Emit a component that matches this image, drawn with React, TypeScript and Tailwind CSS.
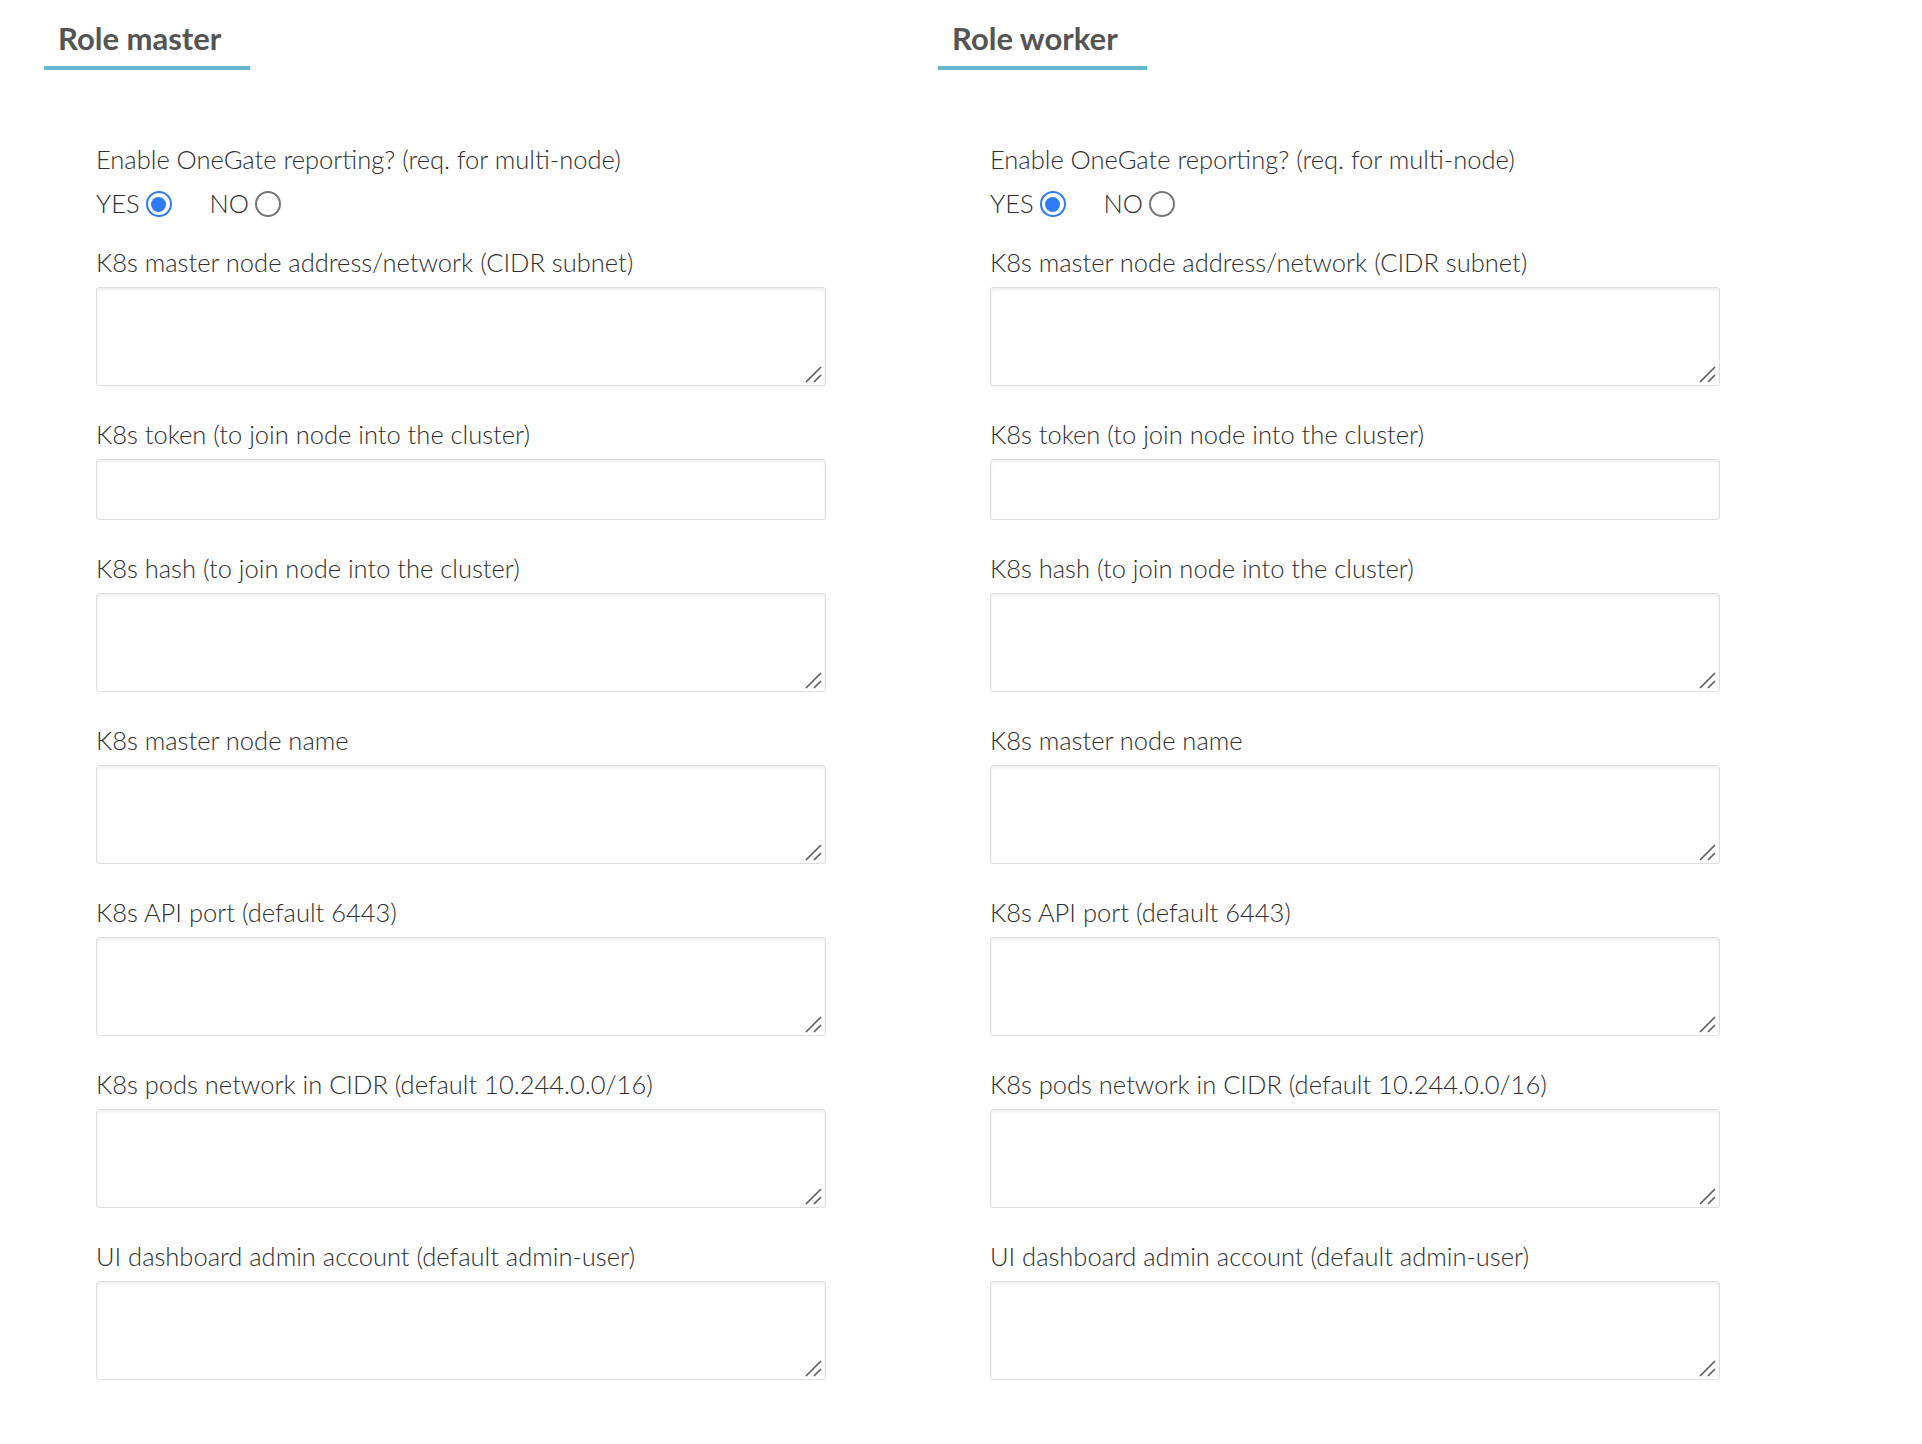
import React from 'react';

interface Field {
  label: string;
  kind: 'textarea' | 'input';
}

const fields: Field[] = [
  { label: 'K8s master node address/network (CIDR subnet)', kind: 'textarea' },
  { label: 'K8s token (to join node into the cluster)', kind: 'input' },
  { label: 'K8s hash (to join node into the cluster)', kind: 'textarea' },
  { label: 'K8s master node name', kind: 'textarea' },
  { label: 'K8s API port (default 6443)', kind: 'textarea' },
  { label: 'K8s pods network in CIDR (default 10.244.0.0/16)', kind: 'textarea' },
  { label: 'UI dashboard admin account (default admin-user)', kind: 'textarea' },
];

function Radio({ checked }: { checked: boolean }) {
  return checked ? (
    <span className="ml-[6px] inline-flex h-[26px] w-[26px] items-center justify-center rounded-full border-2 border-[#2f7bf5] bg-white">
      <span className="h-[15px] w-[15px] rounded-full bg-[#2f7bf5]" />
    </span>
  ) : (
    <span className="ml-[6px] inline-block h-[26px] w-[26px] rounded-full border-2 border-[#767676] bg-white" />
  );
}

// resize grip like the one in the screenshot (bigger than Chrome's own)
function Grip() {
  return (
    <svg
      className="pointer-events-none absolute bottom-[3px] right-[4px]"
      width="18"
      height="18"
      viewBox="0 0 18 18"
    >
      <path d="M2 17 L17 2 M10 17 L17 10" stroke="#5a5a5a" strokeWidth="1.6" strokeLinecap="butt" />
    </svg>
  );
}

function RoleColumn({ title }: { title: string }) {
  const fieldClass =
    'block w-[730px] rounded-[3px] border border-[#dedede] bg-white shadow-[inset_0_2px_3px_rgba(0,0,0,0.07)] outline-none';

  return (
    <section className="w-[894px] shrink-0">
      <h2 className="mt-[19px] inline-block border-b-4 border-[#68b7d0] pb-[9px] pl-[14px] pr-[29px] text-[31px] font-bold leading-[38px] text-[#545454]">
        {title}
      </h2>

      <div className="mt-[75px] pl-[52px] text-[25.5px] font-light leading-[29px] text-[#2e2e2e]">
        <div>Enable OneGate reporting? (req. for multi-node)</div>
        <div className="mt-[16px] flex items-end">
          <span className="leading-[27px]">YES</span>
          <Radio checked />
          <span className="ml-[38px] leading-[27px]">NO</span>
          <Radio checked={false} />
        </div>

        <div className="mt-[31px]">
          {fields.map((f) => (
            <div key={f.label} className="mb-[34px]">
              <label className="block">{f.label}</label>
              {f.kind === 'textarea' ? (
                <div className="relative mt-[10px] w-[730px]">
                  <textarea className={`${fieldClass} h-[99px] resize-none`} />
                  <Grip />
                </div>
              ) : (
                <input type="text" className={`${fieldClass} mt-[10px] h-[61px]`} />
              )}
            </div>
          ))}
        </div>
      </div>
    </section>
  );
}

export default function App() {
  return (
    <div className="min-h-[1444px] bg-white pl-[44px] font-['Lato','Liberation_Sans',sans-serif]">
      <div className="flex">
        <RoleColumn title="Role master" />
        <RoleColumn title="Role worker" />
      </div>
    </div>
  );
}
